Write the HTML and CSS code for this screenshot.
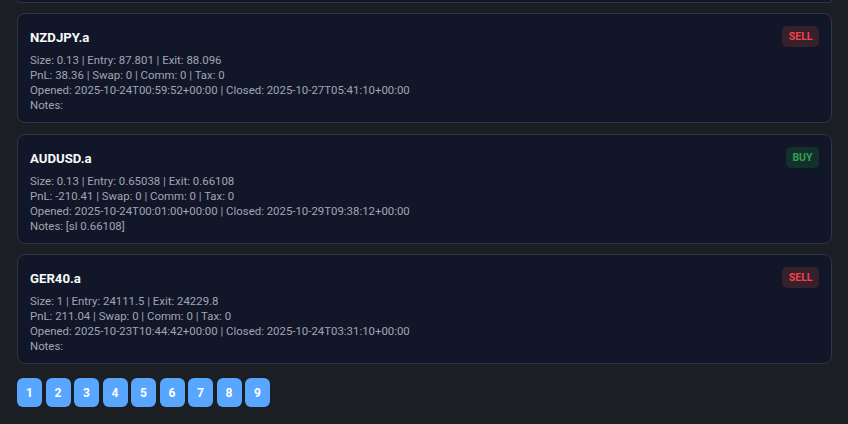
FILE: index.html
```html
<!DOCTYPE html>
<html lang="en">
<head>
<meta charset="utf-8">
<title>Trades</title>
<link rel="stylesheet" href="styles.css">
</head>
<body>
<main class="trades">
  <div class="card-tail"></div>

  <article class="trade">
    <div class="trade-info">
      <h3 class="symbol">NZDJPY.a</h3>
      <div class="details">
        <div>Size: 0.13 | Entry: 87.801 | Exit: 88.096</div>
        <div>PnL: 38.36 | Swap: 0 | Comm: 0 | Tax: 0</div>
        <div>Opened: 2025-10-24T00:59:52+00:00 | Closed: 2025-10-27T05:41:10+00:00</div>
        <div>Notes: </div>
      </div>
    </div>
    <span class="badge sell">SELL</span>
  </article>

  <article class="trade">
    <div class="trade-info">
      <h3 class="symbol">AUDUSD.a</h3>
      <div class="details">
        <div>Size: 0.13 | Entry: 0.65038 | Exit: 0.66108</div>
        <div>PnL: -210.41 | Swap: 0 | Comm: 0 | Tax: 0</div>
        <div>Opened: 2025-10-24T00:01:00+00:00 | Closed: 2025-10-29T09:38:12+00:00</div>
        <div>Notes: [sl 0.66108]</div>
      </div>
    </div>
    <span class="badge buy">BUY</span>
  </article>

  <article class="trade">
    <div class="trade-info">
      <h3 class="symbol">GER40.a</h3>
      <div class="details">
        <div>Size: 1 | Entry: 24111.5 | Exit: 24229.8</div>
        <div>PnL: 211.04 | Swap: 0 | Comm: 0 | Tax: 0</div>
        <div>Opened: 2025-10-23T10:44:42+00:00 | Closed: 2025-10-24T03:31:10+00:00</div>
        <div>Notes: </div>
      </div>
    </div>
    <span class="badge sell">SELL</span>
  </article>

  <nav class="pagination">
    <button class="page">1</button>
    <button class="page">2</button>
    <button class="page">3</button>
    <button class="page">4</button>
    <button class="page">5</button>
    <button class="page">6</button>
    <button class="page">7</button>
    <button class="page">8</button>
    <button class="page">9</button>
  </nav>
</main>
</body>
</html>
```
FILE: styles.css
```css
html, body {
  margin: 0;
  padding: 0;
  background: #1b1e23;
  height: 100%;
}

body {
  font-family: Roboto, "Liberation Sans", Arial, sans-serif;
  color: #9ca3af;
}

.trades {
  padding: 0 16px 0 17px;
  display: flex;
  flex-direction: column;
  gap: 10.5px;
}

.card-tail {
  height: 1.5px;
  border: 1px solid #303641;
  border-top: none;
  border-radius: 0 0 8px 8px;
  background: #111729;
}

.trade {
  display: flex;
  justify-content: space-between;
  align-items: flex-start;
  background: #111729;
  border: 1px solid #303641;
  border-radius: 8px;
  padding: 12px 12px 9px 12px;
}

.symbol {
  margin: 1px 0 4px 0;
  font-size: 13.2px;
  line-height: 22px;
  font-weight: 700;
  color: #f8fafc;
}

.details {
  font-size: 11.4px;
  line-height: 15px;
  color: #a0a6b1;
}

.badge {
  font-family: Roboto, "Liberation Sans", Arial, sans-serif;
  font-size: 10.5px;
  font-weight: 700;
  line-height: 13px;
  padding: 4px 6.5px;
  border-radius: 5px;
}

.badge.sell {
  color: #ef444b;
  background: #36202c;
}

.badge.buy {
  color: #2ea44f;
  background: #14302c;
}

.pagination {
  display: flex;
  gap: 3.5px;
  margin-top: 3.5px;
}

.page {
  height: 29px;
  min-width: 25px;
  padding: 0 9px;
  border: none;
  border-radius: 6px;
  background: #58a6ff;
  color: #ffffff;
  font-family: Roboto, "Liberation Sans", Arial, sans-serif;
  font-size: 12px;
  font-weight: 700;
  cursor: pointer;
}
```
